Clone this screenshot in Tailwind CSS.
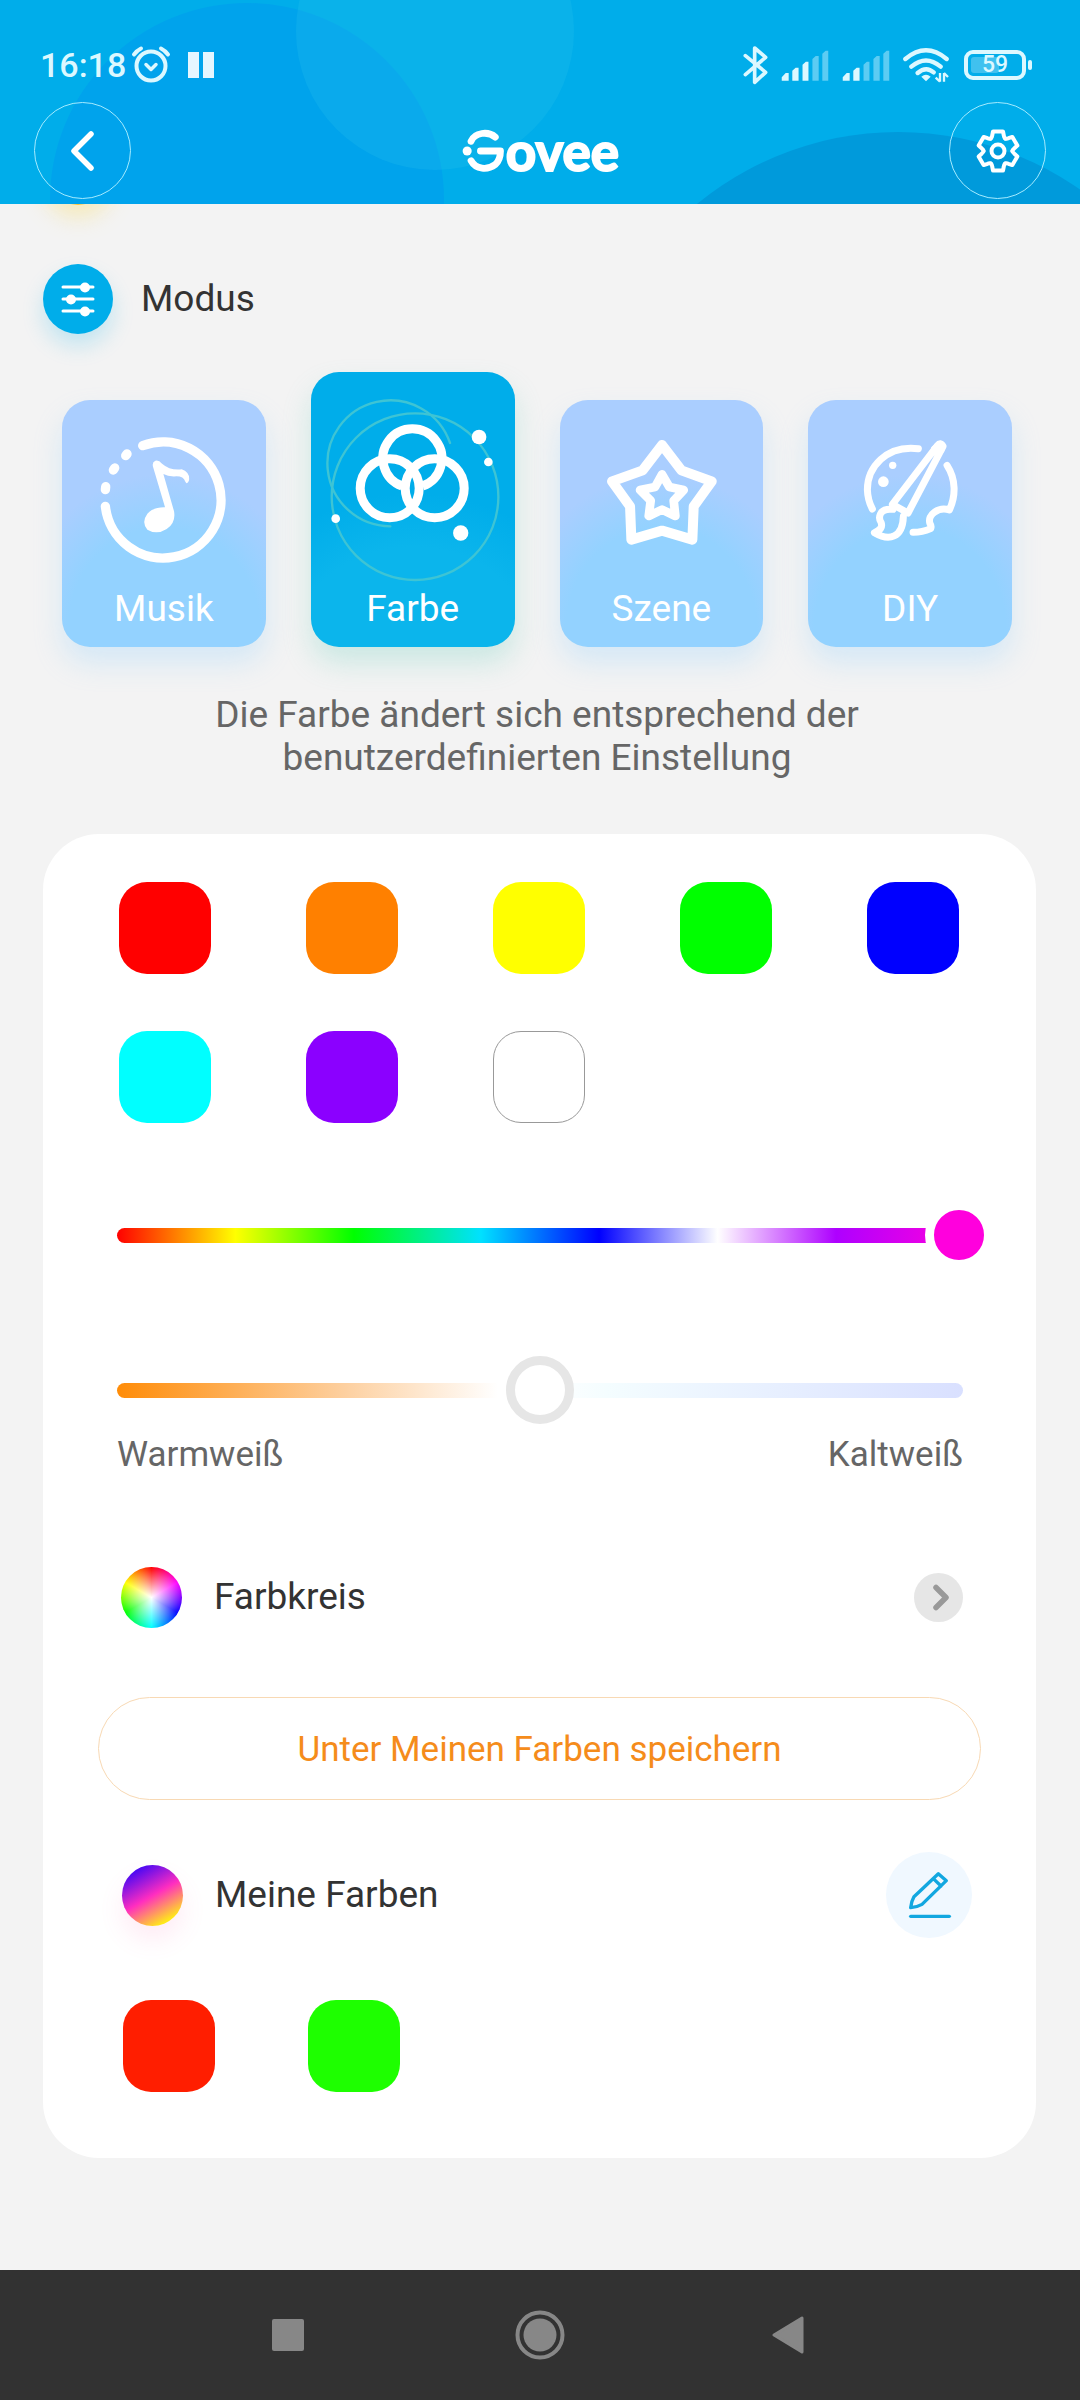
<!DOCTYPE html>
<html lang="de">
<head>
<meta charset="utf-8">
<meta name="viewport" content="width=device-width, initial-scale=1">
<title>Govee – Farbe</title>
<script src="https://cdn.jsdelivr.net/npm/@tailwindcss/browser@4"></script>
</head>
<body class="flex min-h-screen flex-col bg-[#f3f3f3] font-[Roboto,sans-serif] text-[37px] leading-[44px] text-[#333333]">

<header class="relative z-10 overflow-hidden bg-[#00adea] pt-11 pb-[5px] text-white">
  <!-- decorative bubbles -->
  <svg class="absolute top-0 left-0 h-[204px] w-[600px]" viewBox="0 0 600 204" aria-hidden="true">
    <circle cx="247" cy="200" r="197" fill="#00a3ec"/>
    <circle cx="435" cy="31" r="139" fill="#28c0ea" fill-opacity=".26"/>
  </svg>
  <svg class="absolute top-0 right-0 h-[204px] w-[400px]" viewBox="680 0 400 204" aria-hidden="true">
    <circle cx="898" cy="449" r="317" fill="#009adb"/>
  </svg>

  <div class="relative flex h-[42px] items-center justify-between pr-12 pl-10 text-[#dcf8ff]">
    <div class="flex items-center">
      <span class="text-[34px] font-medium">16:18</span>
      <svg class="ml-[5px] h-10 w-10" viewBox="0 0 40 40" fill="none" stroke="currentColor" stroke-linecap="round" aria-label="Wecker">
        <circle cx="20" cy="21" r="14.500" stroke-width="4"/>
        <path d="M15 19.500l5 5 5-5" stroke-width="3.500" stroke-linejoin="round"/>
        <path d="M3 9.500q3-4 7-6M37 9.500q-3-4-7-6" stroke-width="4"/>
      </svg>
      <svg class="ml-[17px] h-[26px] w-[26px]" viewBox="0 0 26 26" fill="#e6f6ff" aria-label="Pause"><path d="M0 0h11v26H0zM15 0h11v26H15z"/></svg>
    </div>
    <div class="flex items-center gap-[13px]">
      <svg class="h-10 w-[25px]" viewBox="40 23 75 120" fill="none" stroke="currentColor" stroke-width="11" stroke-linecap="round" stroke-linejoin="round" aria-label="Bluetooth"><path d="M47 55l61 50-33 30V32l33 28-61 52"/></svg>
      <svg class="h-[31px] w-12" viewBox="155 38 145 94" fill="currentColor" aria-label="Signal 1">
        <path d="M157 121l12-13h9v23h-21zM189 101l10-9h9v39h-19zM220 83l10-9h8v57h-18z"/>
        <path d="M250 65l10-9h9v75h-19zM280 49l10-9h8v91h-18z" opacity=".42"/>
      </svg>
      <svg class="h-[31px] w-12" viewBox="155 38 145 94" fill="currentColor" aria-label="Signal 2">
        <path d="M157 121l12-13h9v23h-21zM189 101l10-9h9v39h-19z"/>
        <path d="M220 83l10-9h8v57h-18zM250 65l10-9h9v75h-19zM280 49l10-9h8v91h-18z" opacity=".42"/>
      </svg>
      <svg class="h-9 w-[46px]" viewBox="519 32 138 108" fill="none" stroke="currentColor" stroke-width="13" stroke-linecap="round" aria-label="WLAN">
        <path d="M526 68Q588 16 650 68M544 91Q588 54 632 91M563 110Q588 88 611 108"/>
        <path d="M574 121Q588 109 602 121L588 135Z" fill="currentColor" stroke="none"/>
        <path d="M630 110v26M642 110v26M630 136l-13-12M642 110l12 12" stroke-width="7" stroke-linecap="butt"/>
      </svg>
      <div class="flex items-center gap-[2px] pl-[2px]">
        <div class="relative flex h-[30px] w-[62px] items-center justify-center rounded-[9px] border-4 border-[#dcf8ff]">
          <span class="absolute inset-y-[3px] left-[3px] w-[28px] rounded-[3px] bg-white/25"></span>
          <span class="relative text-[23px] leading-[22px] font-medium">59</span>
        </div>
        <span class="h-[10px] w-1 rounded-[2px] bg-[#dcf8ff]"></span>
      </div>
    </div>
  </div>

  <div class="relative mt-4 flex items-center justify-between px-[34px]">
    <button type="button" aria-label="Zurück" class="flex size-[97px] items-center justify-center rounded-full border border-[#a5ebff]">
      <svg class="h-11 w-7" viewBox="0 0 28 44" fill="none" stroke="currentColor" stroke-width="5.500" stroke-linecap="round" stroke-linejoin="round"><path d="M22 5L5 22l17 17"/></svg>
    </button>
    <h1 class="flex items-center" aria-label="Govee">
      <svg class="h-[44px] w-[45px]" viewBox="30 20 135 136" fill="none" stroke="currentColor" stroke-width="21" stroke-linecap="round" stroke-linejoin="round" aria-hidden="true">
        <path d="M59 58C70 30 112 26 134 45"/>
        <path d="M59 118C74 146 110 148 134 130Q150 115 150 88H88"/>
        <circle cx="47" cy="88" r="14" fill="currentColor" stroke="none"/>
      </svg>
      <span class="font-[Lato,sans-serif] text-[53px] leading-[44px] font-bold [-webkit-text-stroke:2px_white]">ovee</span>
    </h1>
    <button type="button" aria-label="Einstellungen" class="flex size-[97px] items-center justify-center rounded-full border border-[#a5ebff]">
      <svg class="size-12" viewBox="-24 -24 48 48" fill="none" stroke="currentColor" stroke-width="4" stroke-linecap="round" stroke-linejoin="round">
        <circle r="6.500"/>
        <path d="M-7.200-12.500Q-6-13.500-5.800-15.500L-5-19.500H5L5.800-15.500Q6-13.500 7.200-12.500"/>
        <path transform="rotate(60)" d="M-7.200-12.500Q-6-13.500-5.800-15.500L-5-19.500H5L5.800-15.500Q6-13.500 7.200-12.500"/>
        <path transform="rotate(120)" d="M-7.200-12.500Q-6-13.500-5.800-15.500L-5-19.500H5L5.800-15.500Q6-13.500 7.200-12.500"/>
        <path transform="rotate(180)" d="M-7.200-12.500Q-6-13.500-5.800-15.500L-5-19.500H5L5.800-15.500Q6-13.500 7.200-12.500"/>
        <path transform="rotate(240)" d="M-7.200-12.500Q-6-13.500-5.800-15.500L-5-19.500H5L5.800-15.500Q6-13.500 7.200-12.500"/>
        <path transform="rotate(300)" d="M-7.200-12.500Q-6-13.500-5.800-15.500L-5-19.500H5L5.800-15.500Q6-13.500 7.200-12.500"/>
      </svg>
    </button>
  </div>
</header>

<main class="relative flex-1 pt-[60px] pb-28">
  <!-- glow of the section icon scrolled under the header -->
  <div class="absolute -top-[69px] left-[43px] size-[70px] rounded-full bg-[#fcc53c] shadow-[0_12px_22px_#f9dc6466]" aria-hidden="true"></div>

  <div class="flex items-center gap-7 px-[43px]">
    <div class="flex size-[70px] items-center justify-center rounded-full bg-[#00adea] shadow-[0_12px_22px_#00adea33]">
      <svg class="size-9" viewBox="0 0 36 36" fill="#fff" stroke="#fff" stroke-width="3" stroke-linecap="round" aria-hidden="true">
        <path d="M3 6h30M3 18h30M3 30h30"/>
        <circle cx="25" cy="6.500" r="3.500"/><circle cx="11" cy="18.500" r="3.500"/><circle cx="25" cy="30.500" r="3.500"/>
      </svg>
    </div>
    <h2>Modus</h2>
  </div>

  <div class="mt-[38px] pr-[68px] pl-[62px]">
    <div class="grid grid-cols-4 items-end gap-[45px] text-white">
      <button type="button" class="flex flex-col items-center rounded-[28px] bg-[#aaceff] bg-[radial-gradient(ellipse_72%_62%_at_50%_92%,#93d2ff_65%,#aaceff_100%)] pb-4 shadow-[0_16px_28px_#93d2ff4d]">
        <svg class="h-[187px] w-full" viewBox="66 121 611 561" fill="none" stroke="currentColor" stroke-width="28" stroke-linecap="round" aria-hidden="true">
          <path d="M308 258A174 174 0 1 1 196 440"/>
          <path d="M257 288l4-5M220 331l4-6M196 390l1-9"/>
          <path stroke="none" fill="currentColor" d="M340 325Q334 308 346 303Q356 300 366 312Q390 333 425 329Q450 338 447 362Q442 377 436 366Q430 350 410 350Q385 352 370 343L402 455Q408 490 380 508Q350 527 322 510Q303 488 322 462Q340 442 375 443Z"/>
        </svg>
        <span>Musik</span>
      </button>
      <button type="button" aria-pressed="true" class="flex flex-col items-center rounded-[28px] bg-[#00adea] bg-[radial-gradient(ellipse_90%_56%_at_50%_100%,#0bb5ec_65%,#00adea_100%)] pb-4 shadow-[0_16px_28px_#6fcfc04d]">
        <svg class="h-[215px] w-full" viewBox="812 37 611 645" fill="none" stroke="currentColor" stroke-width="27" aria-hidden="true">
          <g stroke="#3ec4d4" stroke-width="7" stroke-linecap="round">
            <circle cx="1124" cy="411" r="250"/>
            <path d="M1050 500A189 189 0 1 1 1229 250"/>
          </g>
          <path d="M1085 379A88.500 88.500 0 1 1 1147 379"/>
          <circle cx="1048" cy="386" r="88.500"/>
          <circle cx="1183" cy="386" r="88.500"/>
          <g fill="currentColor" stroke="none">
            <circle cx="1316" cy="232" r="22"/><circle cx="1344" cy="307" r="13"/>
            <circle cx="886" cy="477" r="13"/><circle cx="1261" cy="520" r="23"/>
          </g>
        </svg>
        <span>Farbe</span>
      </button>
      <button type="button" class="flex flex-col items-center rounded-[28px] bg-[#aaceff] bg-[radial-gradient(ellipse_72%_62%_at_50%_92%,#93d2ff_65%,#aaceff_100%)] pb-4 shadow-[0_16px_28px_#93d2ff4d]">
        <svg class="h-[187px] w-full" viewBox="60 121 611 561" fill="none" stroke="currentColor" stroke-width="30" stroke-linejoin="round" aria-hidden="true">
          <path d="M366 256L424 332 515 365 461 440 457 540 366 513 274 540 270 440 216 365 308 332Z"/>
          <path stroke-width="26" d="M366 344L388 382 431 391 401 423 406 469 366 450 326 469 332 423 300 391 345 382Z"/>
        </svg>
        <span>Szene</span>
      </button>
      <button type="button" class="flex flex-col items-center rounded-[28px] bg-[#aaceff] bg-[radial-gradient(ellipse_72%_62%_at_50%_92%,#93d2ff_65%,#aaceff_100%)] pb-4 shadow-[0_16px_28px_#93d2ff4d]">
        <svg class="h-[187px] w-full" viewBox="807 121 611 561" fill="none" stroke="currentColor" stroke-width="21" stroke-linecap="round" stroke-linejoin="round" aria-hidden="true">
          <path d="M1138 267C1040 255 985 325 985 390Q986 422 1000 448"/>
          <path d="M1224 317C1252 360 1250 410 1231 451C1200 440 1163 465 1173 492Q1178 500 1175 507Q1150 518 1122 518"/>
          <path d="M1060 434L1195 258Q1204 246 1212 260L1107 460Z"/>
          <path d="M1186 268L1204 254 1206 270Z" fill="currentColor"/>
          <path d="M1062 449C1018 444 1018 476 1026 488Q1034 508 1006 519C1050 545 1091 535 1093 470"/>
          <circle cx="1061" cy="317" r="11" fill="currentColor" stroke="none"/><circle cx="1033" cy="366" r="16" fill="currentColor" stroke="none"/>
        </svg>
        <span>DIY</span>
      </button>
    </div>
    <p class="mx-auto mt-[46px] max-w-[700px] text-center leading-[43px] text-[#666666]">Die Farbe ändert sich entsprechend der benutzerdefinierten Einstellung</p>
  </div>

  <section class="mt-[55px] mr-11 ml-[43px] rounded-[56px] bg-white pt-12 pb-[66px]">
    <div class="grid grid-cols-[repeat(5,92px)] justify-between gap-y-[57px] pr-[77px] pl-[76px]">
      <button type="button" aria-label="Rot" class="h-[92px] rounded-[28px] bg-[#ff0000]"></button>
      <button type="button" aria-label="Orange" class="h-[92px] rounded-[28px] bg-[#ff8000]"></button>
      <button type="button" aria-label="Gelb" class="h-[92px] rounded-[28px] bg-[#ffff00]"></button>
      <button type="button" aria-label="Grün" class="h-[92px] rounded-[28px] bg-[#00ff00]"></button>
      <button type="button" aria-label="Blau" class="h-[92px] rounded-[28px] bg-[#0000ff]"></button>
      <button type="button" aria-label="Cyan" class="h-[92px] rounded-[28px] bg-[#00ffff]"></button>
      <button type="button" aria-label="Violett" class="h-[92px] rounded-[28px] bg-[#8b00ff]"></button>
      <button type="button" aria-label="Weiß" class="h-[92px] rounded-[28px] border border-[#999999] bg-white"></button>
    </div>

    <div class="mt-[78px] pr-[73px] pl-[74px]">
      <div class="relative flex h-[68px] items-center">
        <div class="absolute inset-x-0 h-[15px] rounded-full bg-[linear-gradient(90deg,#ff0000,#ffff00_14%,#00ff00_28%,#00e1ff_43%,#0000ff_57%,#ffffff_71%,#ae00ff_85%,#ff00dd)]"></div>
        <input type="range" min="0" max="1000" value="995" aria-label="Farbton" class="relative -mx-[34px] h-[68px] w-[calc(100%+68px)] shrink-0 appearance-none bg-transparent [&::-webkit-slider-thumb]:size-[68px] [&::-webkit-slider-thumb]:appearance-none [&::-webkit-slider-thumb]:rounded-full [&::-webkit-slider-thumb]:border-[9px] [&::-webkit-slider-thumb]:border-white [&::-webkit-slider-thumb]:bg-[#ff00dd]">
      </div>
      <div class="relative mt-[87px] flex h-[68px] items-center">
        <div class="absolute inset-x-0 h-[15px] rounded-full bg-[linear-gradient(90deg,#ff8c08,#fdd0a0_27%,#ffffff_45%,#ffffff_50%,#f4fdff_58%,#d9e0ff)]"></div>
        <input type="range" min="0" max="1000" value="500" aria-label="Farbtemperatur" class="relative -mx-[34px] h-[68px] w-[calc(100%+68px)] shrink-0 appearance-none bg-transparent [&::-webkit-slider-thumb]:size-[68px] [&::-webkit-slider-thumb]:appearance-none [&::-webkit-slider-thumb]:rounded-full [&::-webkit-slider-thumb]:border-[9px] [&::-webkit-slider-thumb]:border-[#e6e6e6] [&::-webkit-slider-thumb]:bg-white">
      </div>
      <div class="mt-[9px] flex justify-between text-[35px] text-[#666666]"><span>Warmweiß</span><span>Kaltweiß</span></div>
    </div>

    <button type="button" class="mt-[88px] flex h-16 w-full items-center pr-[73px] pl-[78px] text-left">
      <span class="size-[61px] rounded-full bg-[radial-gradient(closest-side,#ffffff,#ffffff00),conic-gradient(#ff0000,#ff00ff,#0000ff,#00ffff,#00ff00,#ffff00,#ff0000)]"></span>
      <span class="ml-8 flex-1">Farbkreis</span>
      <svg class="size-[49px]" viewBox="0 0 49 49" fill="none" aria-hidden="true"><circle cx="24.500" cy="24.500" r="24.500" fill="#e6e6e6"/><path d="M22 14.500L32 24.500 22 34.500" stroke="#999999" stroke-width="5.500" stroke-linecap="round" stroke-linejoin="round"/></svg>
    </button>

    <div class="mt-[68px] px-[55px]">
      <button type="button" class="h-[103px] w-full rounded-full border border-[#f8d9b4] pt-[2px] text-[35px] text-[#f58c1b]">Unter Meinen Farben speichern</button>
    </div>

    <div class="mt-[52px] flex items-center pr-16 pl-[79px]">
      <span class="size-[61px] rounded-full bg-[linear-gradient(150deg,#2000ff_5%,#ff2dc0_50%,#ffe81a_85%)] shadow-[0_14px_24px_#ff5fb01f]"></span>
      <h3 class="ml-8 flex-1">Meine Farben</h3>
      <button type="button" aria-label="Meine Farben bearbeiten" class="size-[86px] rounded-full bg-[#f0f8ff] text-[#12a7e0]">
        <svg class="size-full" viewBox="18 36 258 258" fill="none" stroke="currentColor" stroke-width="10" stroke-linecap="round" stroke-linejoin="round" aria-hidden="true">
          <path d="M92 203Q94 184 102 170L175 101 199 122 126 193Q110 202 92 203ZM160 116L183 138"/><path d="M92 229H208"/>
        </svg>
      </button>
    </div>

    <div class="mt-[62px] flex gap-[93px] px-20">
      <button type="button" aria-label="Gespeicherte Farbe Rot" class="size-[92px] rounded-[28px] bg-[#ff1e00]"></button>
      <button type="button" aria-label="Gespeicherte Farbe Grün" class="size-[92px] rounded-[28px] bg-[#1eff00]"></button>
    </div>
  </section>
</main>

<nav aria-label="System" class="flex h-[130px] items-center justify-center gap-[188px] bg-[#323232] text-[#878787]">
  <button type="button" aria-label="Übersicht" class="flex size-16 items-center justify-center"><svg class="size-8" viewBox="0 0 32 32" fill="currentColor"><rect width="32" height="32" rx="2"/></svg></button>
  <button type="button" aria-label="Startseite" class="flex size-16 items-center justify-center"><svg class="size-[50px]" viewBox="0 0 50 50" fill="currentColor"><circle cx="25" cy="25" r="22.500" fill="none" stroke="currentColor" stroke-width="4"/><circle cx="25" cy="25" r="16.500"/></svg></button>
  <button type="button" aria-label="Zurück" class="flex size-16 items-center justify-center"><svg class="h-[38px] w-10" viewBox="0 0 40 38" fill="currentColor" stroke="currentColor" stroke-width="3" stroke-linejoin="round"><path d="M30 2v34L2 19z"/></svg></button>
</nav>
</body>
</html>
